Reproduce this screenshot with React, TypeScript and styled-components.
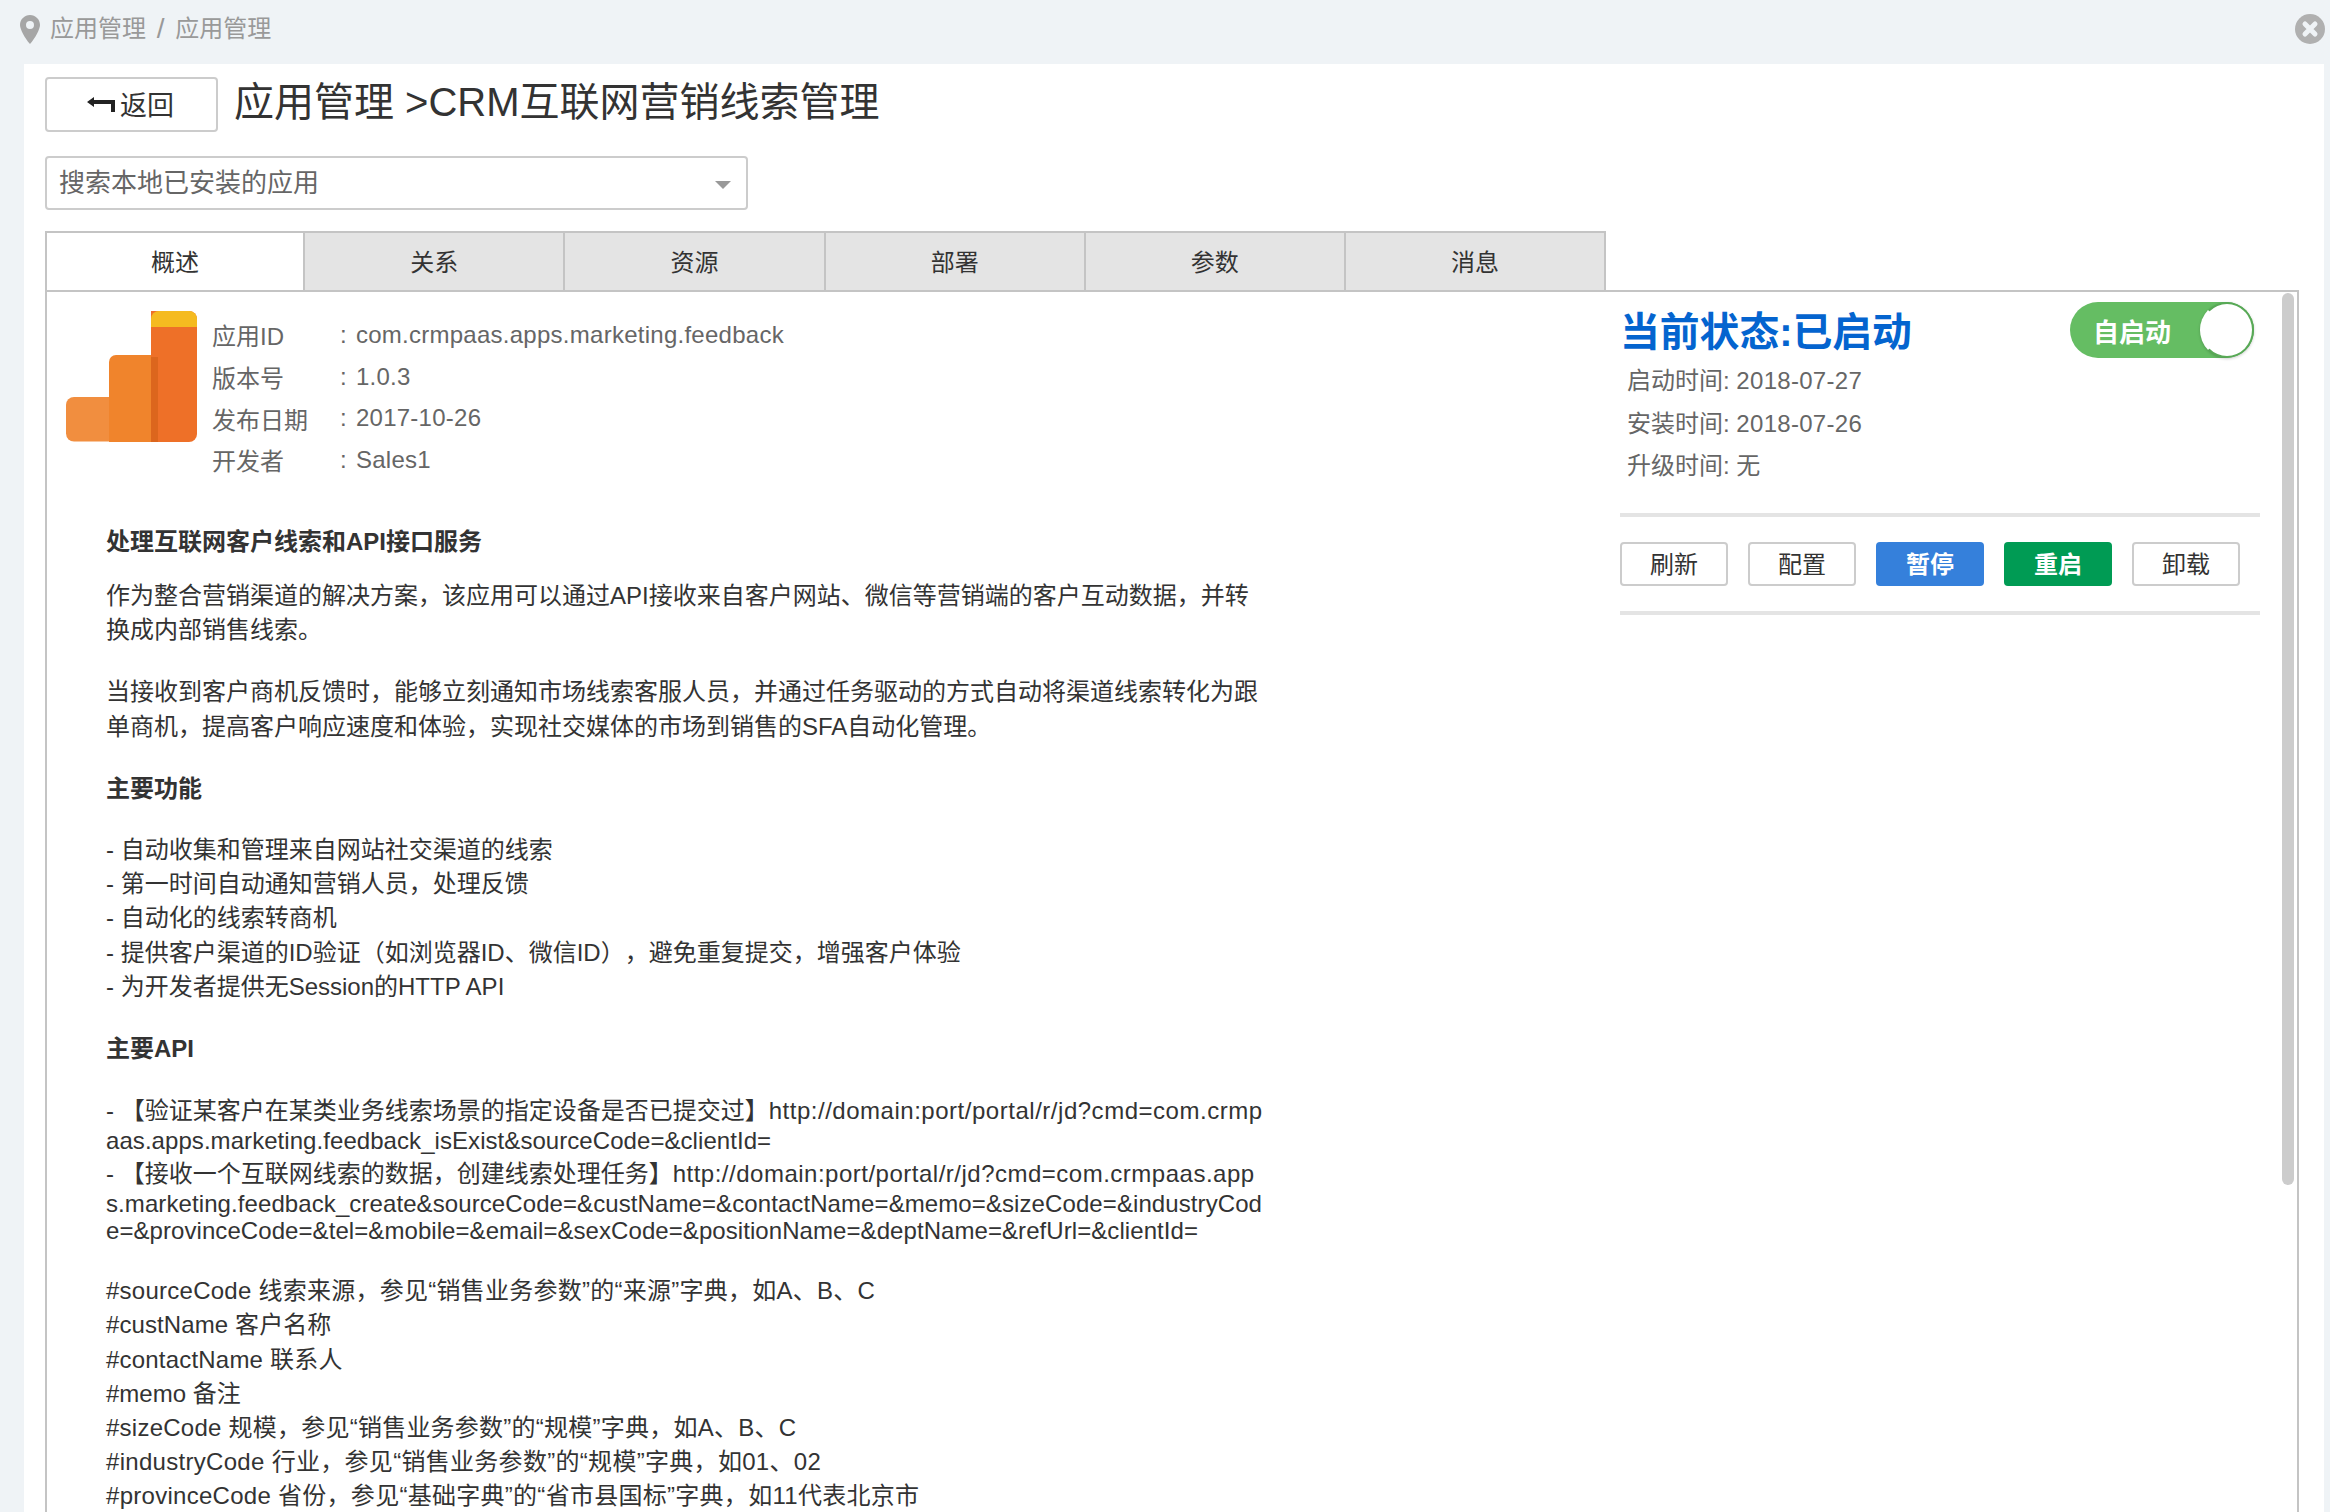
import { Fragment } from "react";
import styled, { createGlobalStyle } from "styled-components";

const GlobalStyle = createGlobalStyle`
    html, body {
        margin: 0;
        padding: 0;
        height: 1512px;
        overflow: hidden;
        background: #eff3f6;
        font-family: "Liberation Sans", "Noto Sans CJK SC", sans-serif;
        color: #333;
        text-spacing-trim: space-all;
    }
    * { box-sizing: border-box; }
`

const Page = styled.div`
    height: 1512px;
    display: flex;
    flex-direction: column;
    overflow: hidden;
`

const TopBar = styled.div`
    height: 64px;
    flex: none;
    display: flex;
    align-items: center;
    justify-content: space-between;
    padding: 0 5px 6px 20px;
`

const Crumbs = styled.div`
    display: flex;
    align-items: center;
    gap: 10px;
    font-size: 24px;
    line-height: 32px;
    color: #999;
`

const CrumbSlash = styled.span`
    margin: 0 3px;
    font-size: 28px;
    vertical-align: -1px;
`

const Panel = styled.div`
    flex: 1;
    min-height: 0;
    margin: 0 6px 0 24px;
    padding: 13px 25px 0 21px;
    background: #fff;
    display: flex;
    flex-direction: column;
    overflow: hidden;
`

const TitleRow = styled.div`
    display: flex;
    align-items: center;
    gap: 16px;
    flex: none;
`

const BackButton = styled.button`
    width: 173px;
    height: 55px;
    display: flex;
    align-items: center;
    justify-content: center;
    gap: 5px;
    background: #fff;
    border: 2px solid #ccc;
    border-radius: 4px;
    font: inherit;
    font-size: 27px;
    color: #333;
    padding: 0 2px 2px 0;
`

const Title = styled.h1`
    margin: 0;
    padding-bottom: 5px;
    font-size: 40px;
    font-weight: 400;
    line-height: 50px;
    color: #333;
    white-space: nowrap;
`

const SearchSelect = styled.div`
    flex: none;
    width: 703px;
    height: 54px;
    margin-top: 24px;
    padding: 0 15px 5px 12px;
    display: flex;
    align-items: center;
    justify-content: space-between;
    border: 2px solid #ccc;
    border-radius: 4px;
    font-size: 26px;
    color: #666;
`

const Caret = styled.span`
    width: 0;
    height: 0;
    margin-top: 9px;
    border-left: 8px solid transparent;
    border-right: 8px solid transparent;
    border-top: 8px solid #999;
`

const TabStrip = styled.div`
    flex: none;
    display: flex;
    margin-top: 21px;
`

const Tab = styled.div<{ $active?: boolean }>`
    width: 260.2px;
    height: 60px;
    display: flex;
    align-items: center;
    justify-content: center;
    font-size: 24px;
    color: #333;
    background: ${props => props.$active ? "#fff" : "#e4e4e4"};
    border-top: 2px solid #c4c4c4;
    border-right: 2px solid #c4c4c4;
    border-left: ${props => props.$active ? "2px solid #c4c4c4" : "none"};
    padding-bottom: 4px;
`

const ContentBox = styled.div`
    flex: 1;
    min-height: 0;
    position: relative;
    margin-top: -1px;
    border: 2px solid #c4c4c4;
    border-bottom: none;
    display: grid;
    grid-template-columns: 1573px 1fr;
    overflow: hidden;
`

const Scrollbar = styled.div`
    position: absolute;
    top: 1px;
    right: 3px;
    width: 12px;
    height: 892px;
    border-radius: 6px;
    background: #ccc;
`

const LeftColumn = styled.div`
    padding: 19px 0 0 19px;
`

const AppInfo = styled.div`
    display: flex;
    gap: 15px;
`

const InfoList = styled.dl`
    margin: 3px 0 0;
    display: grid;
    grid-template-columns: 128px 1fr;
    grid-auto-rows: 41.7px;
    align-items: center;
    font-size: 24px;
    color: #666;
`

const InfoLabel = styled.dt`
    white-space: nowrap;
`

const InfoValue = styled.dd`
    margin: 0;
    white-space: nowrap;
    letter-spacing: .26px;
`

const Colon = styled.span`
    margin-right: 9px;
`

const Description = styled.div`
    margin: 44px 0 0 40px;
    font-size: 24px;
    color: #333;
    white-space: nowrap;
`

const Para = styled.p<{ $gap?: number; $bold?: boolean }>`
    margin: ${props => props.$gap ?? 28}px 0 0;
    line-height: 34.2px;
    font-weight: ${props => props.$bold ? 700 : 400};
`

const ApiLine = styled.span<{ $shift?: number }>`
    display: block;
    line-height: 30px;
    margin-top: ${props => props.$shift ?? 0}px;
`

const Track = styled.span<{ $spacing: number }>`
    letter-spacing: ${props => props.$spacing}px;
`

const RightColumn = styled.div`
    padding: 10px 38px 0 0;
    width: 678px;
`

const StatusHead = styled.div`
    display: flex;
    align-items: center;
    justify-content: space-between;
    padding-right: 6px;
    height: 56px;
`

const StatusTitle = styled.div`
    margin-bottom: 3px;
    font-size: 39.8px;
    font-weight: 700;
    color: #0464cf;
    white-space: nowrap;
`

const Toggle = styled.div`
    position: relative;
    width: 184px;
    height: 56px;
    border-radius: 28px;
    background: #65bd63;
    color: #fff;
    font-size: 26px;
    font-weight: 700;
    display: flex;
    align-items: center;
    padding-left: 23px;
`

const ToggleKnob = styled.span`
    position: absolute;
    right: 0;
    top: 0;
    width: 54px;
    height: 56px;
    border-radius: 50%;
    background: #fff;
    border: 2px solid #58a956;
    border-left-color: #fff;
    box-shadow: 0 1px 3px rgba(0, 0, 0, .2);
`

const Dates = styled.div`
    margin: 2px 0 0 7px;
    font-size: 24px;
    line-height: 42.5px;
    color: #666;
`

const ActionBar = styled.div`
    margin-top: 25px;
    padding: 25px 0 25px;
    border-top: 4px solid #e4e4e4;
    border-bottom: 4px solid #e4e4e4;
    display: flex;
    gap: 20px;
`

const ActionButton = styled.button<{ $tone?: "blue" | "green" }>`
    width: 108px;
    height: 44px;
    padding: 0 0 2px;
    font: inherit;
    font-size: 24px;
    font-weight: ${props => props.$tone ? 700 : 400};
    border-radius: 4px;
    color: ${props => props.$tone ? "#fff" : "#333"};
    background: ${props => props.$tone === "blue" ? "#3580db" : props.$tone === "green" ? "#009b54" : "#fff"};
    border: ${props => props.$tone ? "none" : "2px solid #ccc"};
`

const PinIcon = () => (
    <svg width="20" height="29" viewBox="0 0 20 29">
        <path fillRule="evenodd" fill="#a6a6a6" d="M10 0C4.5 0 0 4.4 0 9.9c0 4 4.6 13 10 19 5.4-6 10-15 10-19C20 4.4 15.5 0 10 0zm0 6a4 4 0 1 1 0 8 4 4 0 0 1 0-8z" />
    </svg>
)

const CloseIcon = () => (
    <svg width="30" height="30" viewBox="0 0 30 30">
        <circle cx="15" cy="15" r="15" fill="#b0b0b0" />
        <path d="M10 10l10 10M20 10L10 20" stroke="#eff3f6" strokeWidth="5" strokeLinecap="round" />
    </svg>
)

const BackArrow = () => (
    <svg width="28" height="16" viewBox="0 0 28 16">
        <path d="M0 6l7-5v3h21v12h-4V8H7v3z" fill="#222" />
    </svg>
)

const AppLogo = () => (
    <svg width="131" height="131" viewBox="0 0 131 131">
        <path d="M8 86h38v44.5H8a8 8 0 0 1-8-8V94a8 8 0 0 1 8-8z" fill="#f18e3f" />
        <path d="M50 44h36v87H43V51a7 7 0 0 1 7-7z" fill="#f0842c" />
        <path d="M85 0h38a8 8 0 0 1 8 8v115a8 8 0 0 1-8 8H85z" fill="#ee7028" />
        <path d="M85 46h7v85h-7z" fill="#dc661d" />
        <path d="M93 0h30a8 8 0 0 1 8 8v8H85V8a8 8 0 0 1 8-8z" fill="#f5bb20" />
    </svg>
)

const tabs = ["概述", "关系", "资源", "部署", "参数", "消息"]

const info = [
    ["应用ID", "com.crmpaas.apps.marketing.feedback"],
    ["版本号", "1.0.3"],
    ["发布日期", "2017-10-26"],
    ["开发者", "Sales1"],
]

const actions: { label: string; tone?: "blue" | "green" }[] = [
    { label: "刷新" },
    { label: "配置" },
    { label: "暂停", tone: "blue" },
    { label: "重启", tone: "green" },
    { label: "卸载" },
]

const App = () => {
    return (
        <Page>
            <GlobalStyle />
            <TopBar>
                <Crumbs>
                    <PinIcon />
                    <span>应用管理<CrumbSlash> / </CrumbSlash>应用管理</span>
                </Crumbs>
                <CloseIcon />
            </TopBar>
            <Panel>
                <TitleRow>
                    <BackButton><BackArrow />返回</BackButton>
                    <Title>应用管理 &gt;CRM互联网营销线索管理</Title>
                </TitleRow>
                <SearchSelect>搜索本地已安装的应用<Caret /></SearchSelect>
                <TabStrip>
                    {tabs.map((tab, index) => <Tab key={tab} $active={index === 0}>{tab}</Tab>)}
                </TabStrip>
                <ContentBox>
                    <LeftColumn>
                        <AppInfo>
                            <AppLogo />
                            <InfoList>
                                {info.map(([label, value]) => (
                                    <Fragment key={label}>
                                        <InfoLabel>{label}</InfoLabel>
                                        <InfoValue><Colon>:</Colon>{value}</InfoValue>
                                    </Fragment>
                                ))}
                            </InfoList>
                        </AppInfo>
                        <Description>
                            <Para $gap={0} $bold>处理互联网客户线索和API接口服务</Para>
                            <Para $gap={20}>
                                作为整合营销渠道的解决方案，该应用可以通过API接收来自客户网站、微信等营销端的客户互动数据，并转<br />
                                换成内部销售线索。
                            </Para>
                            <Para>
                                当接收到客户商机反馈时，能够立刻通知市场线索客服人员，并通过任务驱动的方式自动将渠道线索转化为跟<br />
                                单商机，提高客户响应速度和体验，实现社交媒体的市场到销售的SFA自动化管理。
                            </Para>
                            <Para $bold>主要功能</Para>
                            <Para $gap={27}>
                                - 自动收集和管理来自网站社交渠道的线索<br />
                                - 第一时间自动通知营销人员，处理反馈<br />
                                - 自动化的线索转商机<br />
                                - 提供客户渠道的ID验证（如浏览器ID、微信ID），避免重复提交，增强客户体验<br />
                                - 为开发者提供无Session的HTTP API
                            </Para>
                            <Para $bold>主要API</Para>
                            <Para $gap={30}>
                                <ApiLine>- 【验证某客户在某类业务线索场景的指定设备是否已提交过】<Track $spacing={.52}>http://domain:port/portal/r/jd?cmd=com.crmp</Track></ApiLine>
                                <ApiLine><Track $spacing={.06}>aas.apps.marketing.feedback_isExist&amp;sourceCode=&amp;clientId=</Track></ApiLine>
                                <ApiLine $shift={3}>- 【接收一个互联网线索的数据，创建线索处理任务】<Track $spacing={.5}>http://domain:port/portal/r/jd?cmd=com.crmpaas.app</Track></ApiLine>
                                <ApiLine><Track $spacing={.09}>s.marketing.feedback_create&amp;sourceCode=&amp;custName=&amp;contactName=&amp;memo=&amp;sizeCode=&amp;industryCod</Track></ApiLine>
                                <ApiLine $shift={-3}><Track $spacing={.07}>e=&amp;provinceCode=&amp;tel=&amp;mobile=&amp;email=&amp;sexCode=&amp;positionName=&amp;deptName=&amp;refUrl=&amp;clientId=</Track></ApiLine>
                            </Para>
                            <Para $gap={28}>
                                <Track $spacing={.25}>#sourceCode 线索来源，参见“销售业务参数”的“来源”字典，如A、B、C</Track><br />
                                <Track $spacing={.1}>#custName 客户名称</Track><br />
                                <Track $spacing={.2}>#contactName 联系人</Track><br />
                                #memo 备注<br />
                                <Track $spacing={.24}>#sizeCode 规模，参见“销售业务参数”的“规模”字典，如A、B、C</Track><br />
                                <Track $spacing={.3}>#industryCode 行业，参见“销售业务参数”的“规模”字典，如01、02</Track><br />
                                <Track $spacing={.28}>#provinceCode 省份，参见“基础字典”的“省市县国标”字典，如11代表北京市</Track>
                            </Para>
                        </Description>
                    </LeftColumn>
                    <RightColumn>
                        <StatusHead>
                            <StatusTitle>当前状态:已启动</StatusTitle>
                            <Toggle>自启动<ToggleKnob /></Toggle>
                        </StatusHead>
                        <Dates>
                            启动时间: <Track $spacing={.3}>2018-07-27</Track><br />
                            安装时间: <Track $spacing={.3}>2018-07-26</Track><br />
                            升级时间: 无
                        </Dates>
                        <ActionBar>
                            {actions.map(action => (
                                <ActionButton key={action.label} $tone={action.tone}>{action.label}</ActionButton>
                            ))}
                        </ActionBar>
                    </RightColumn>
                    <Scrollbar />
                </ContentBox>
            </Panel>
        </Page>
    )
}

export default App
